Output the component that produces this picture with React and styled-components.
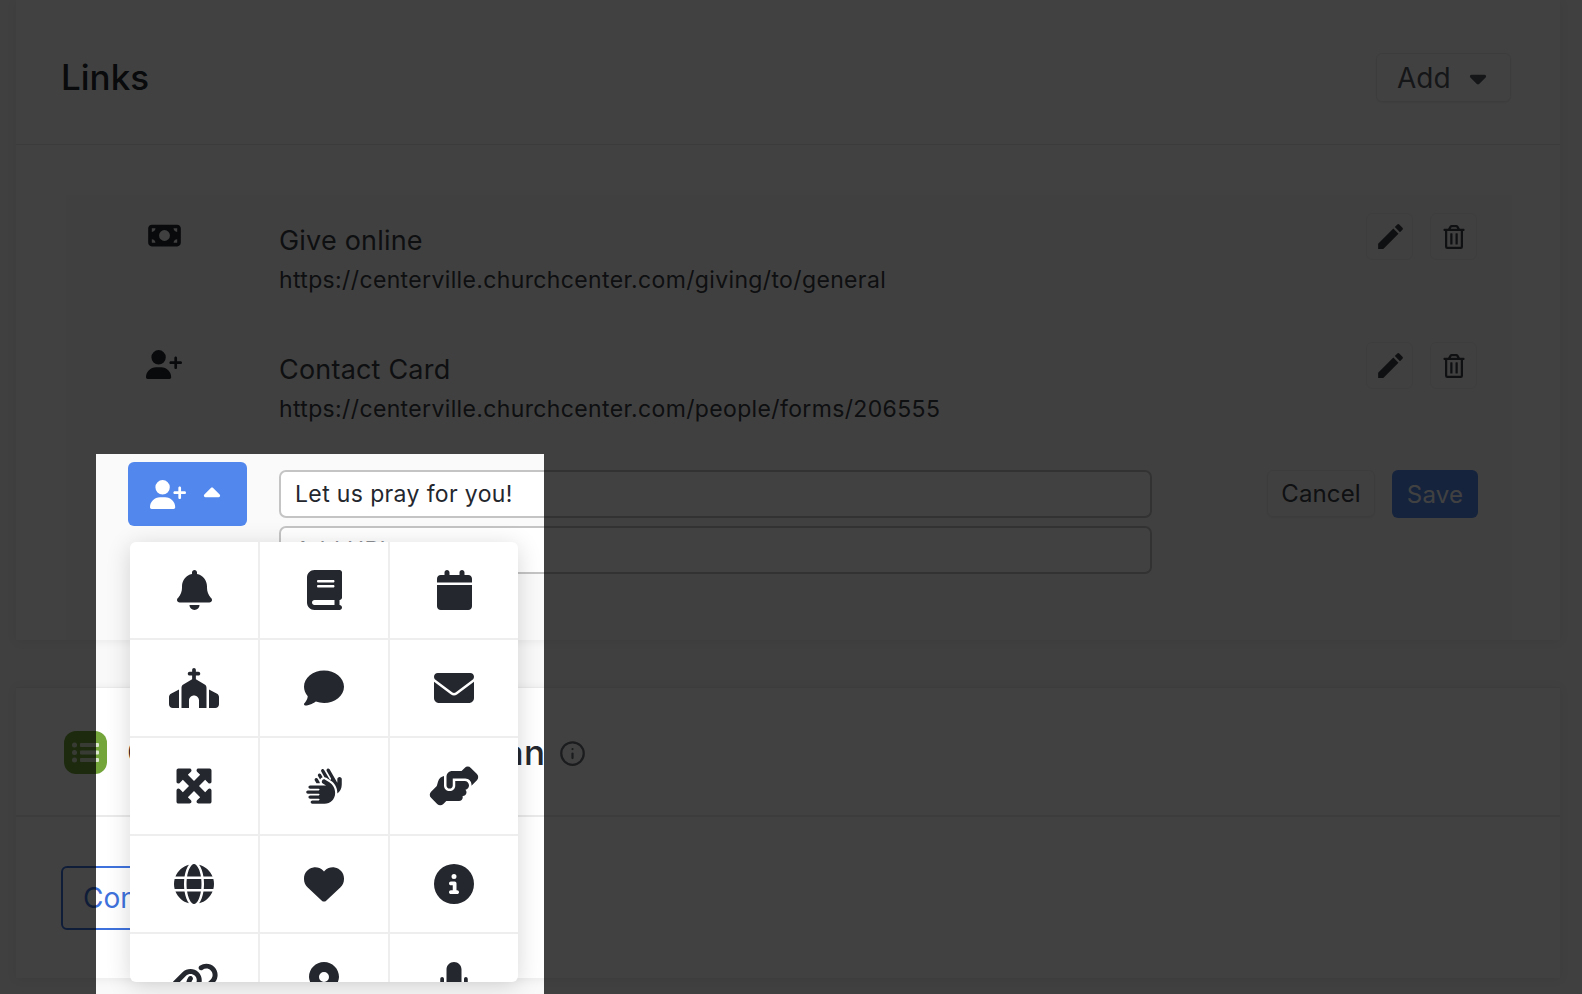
import React from 'react';
import styled, { createGlobalStyle } from 'styled-components';
import {
  FaBell, FaBook, FaCalendar, FaChurch, FaComment, FaEnvelope, FaMaximize,
  FaHands, FaHandshakeAngle, FaGlobe, FaHeart, FaCircleInfo,
  FaLink, FaLocationDot, FaMicrophone, FaMoneyBill, FaUserPlus,
  FaCaretDown, FaCaretUp,
} from 'react-icons/fa6';
import { FaRegTrashAlt } from 'react-icons/fa';
import { MdEdit } from 'react-icons/md';
import { FiInfo } from 'react-icons/fi';

const Global = createGlobalStyle`
  html, body { margin: 0; height: 100%; overflow: hidden; background: #f9f9f9; }
  body { font-family: Inter, "Liberation Sans", sans-serif; color: #24272e; }
  * { box-sizing: border-box; }
`;

const Page = styled.div`
  position: relative;
  width: 1582px;
  height: 994px;
  overflow: hidden;
  padding: 0 22px 0 16px;
`;
const Spotlight = styled.div`
  position: absolute;
  left: 96px;
  top: 454px;
  width: 448px;
  height: 600px;
  box-shadow: 0 0 0 3000px rgba(0, 0, 0, 0.745);
  z-index: 10;
  pointer-events: none;
`;
const Panel = styled.section`
  background: #fff;
  box-shadow: 0 1px 10px rgba(0, 0, 0, 0.07);
`;
const LinksPanel = styled(Panel)`
  height: 640px;
  margin-bottom: 47px;
`;
const PanelHeader = styled.header`
  height: 145px;
  padding: 0 52px 0 46px;
  display: flex;
  align-items: center;
  justify-content: space-between;
  border-bottom: 1px solid #e8e8e8;
`;
const Title = styled.h2`
  margin: 10px 0 0 -1px;
  font-size: 35px;
  font-weight: 550;
  color: #24272e;
`;
const Button = styled.button`
  font: inherit;
  font-size: 26px;
  height: 48px;
  padding: 0 16px;
  display: inline-flex;
  align-items: center;
  border: 1px solid #ececec;
  border-radius: 6px;
  background: #fff;
  color: #5c6068;
  box-shadow: 0 1px 2px rgba(0,0,0,.06);
`;
const AddButton = styled(Button)`
  height: 49px;
  width: 135px;
  font-size: 28px;
  padding: 0 0 0 20px;
  gap: 14px;
  margin-top: 11px;
  margin-right: -3px;
  color: #55585f;
  & svg { width: 26px; height: 26px; }
`;
const LinksCard = styled.div`
  margin: 50px 48px 0 50px;
  height: 445px;
  background: #fafafa;
`;
const Row = styled.div`
  display: grid;
  grid-template-columns: 213px 1fr auto;
  height: 129px;
  padding: 18px 35px 0 0;
`;
const IconSlot = styled.div`
  width: 196px;
  padding-top: 8px;
  display: flex;
  justify-content: center;
  align-items: flex-start;
  color: #24272e;
  & svg { display: block; width: ${(p) => p.$w}px; height: 29px; }
`;
const LinkText = styled.div`
  padding-top: 11px;
`;
const LinkName = styled.div`
  font-size: 27px;
  line-height: 34px;
  letter-spacing: 0.2px;
  color: #3a3d44;
`;
const LinkUrl = styled.div`
  margin-top: 7px;
  font-size: 23px;
  line-height: 30px;
  letter-spacing: 0.36px;
  color: #3a3d44;
`;
const RowActions = styled.div`
  display: flex;
  gap: 17px;
`;
const IconButton = styled.button`
  width: 47px;
  height: 47px;
  display: flex;
  align-items: center;
  justify-content: center;
  padding: 0;
  border: 1px solid #efefef;
  border-radius: 6px;
  background: #fafafa;
  color: #3c3f46;
`;
const EditIcon = styled(MdEdit)`
  width: 33px;
  height: 33px;
  margin-left: 1px;
`;
const TrashIcon = styled(FaRegTrashAlt)`
  width: 24px;
  height: 24px;
`;
const FormRow = styled.div`
  display: grid;
  grid-template-columns: 213px 873px 1fr auto;
  padding: 0 34px 0 0;
  margin-top: 9px;
`;
const PickerWrap = styled.div`
  position: relative;
  margin-left: 62px;
  width: 119px;
`;
const PickerButton = styled.button`
  width: 119px;
  height: 64px;
  border: 0;
  border-radius: 6px;
  background: #5288ee;
  color: #fff;
  display: flex;
  align-items: center;
  padding: 0 0 0 22px;
  gap: 13px;
  & svg:first-child { width: 36px; height: 29px; }
  & svg:last-child { width: 26px; height: 26px; }
`;
const Dropdown = styled.div`
  position: absolute;
  left: 2px;
  top: 80px;
  width: 388px;
  height: 440px;
  background: #fff;
  border-radius: 6px;
  overflow: hidden;
  box-shadow: 0 4px 24px rgba(0, 0, 0, 0.16);
  display: grid;
  grid-template-columns: 130px 130px 128px;
  grid-auto-rows: 98px;
  z-index: 5;
`;
const Cell = styled.div`
  display: flex;
  align-items: center;
  justify-content: center;
  color: #24272e;
  border-right: 2px solid #eee;
  border-bottom: 2px solid #eee;
  &:nth-child(3n) { border-right: 0; }
  & svg { width: ${(p) => p.$w}px; height: 40px; }
`;
const Fields = styled.div`
  display: flex;
  flex-direction: column;
  gap: 8px;
  padding-top: 8px;
`;
const Field = styled.input`
  width: 100%;
  height: 48px;
  padding: 0 14px;
  font: inherit;
  font-size: 23px;
  letter-spacing: 0.36px;
  color: #24272e;
  border: 2px solid #c4c4c4;
  border-radius: 7px;
  background: #fff;
  outline: 0;
  &::placeholder { color: #8c8f95; }
`;
const FormActions = styled.div`
  grid-column: 4;
  display: flex;
  gap: 17px;
  padding-top: 8px;
`;
const CancelButton = styled(Button)`
  width: 108px;
  height: 47px;
  justify-content: center;
  padding: 0;
  font-size: 24px;
  letter-spacing: 0.1px;
  background: #fafafa;
  color: #3c3f46;
`;
const SaveButton = styled(Button)`
  width: 86px;
  height: 48px;
  justify-content: center;
  padding: 0;
  font-size: 24px;
  letter-spacing: 0.2px;
  border: 0;
  background: #5288ee;
  color: #fff;
  box-shadow: none;
`;
const PlanPanel = styled(Panel)`
  height: 291px;
`;
const PlanHeader = styled.div`
  height: 130px;
  padding: 0 0 0 48px;
  display: flex;
  align-items: center;
  gap: 20px;
  border-bottom: 2px solid #eaeaea;
  border-top: 1px solid #eaeaea;
`;
const AppMark = styled.div`
  width: 43px;
  height: 43px;
  margin-top: 2px;
  border-radius: 12px;
  background: #73a53a;
  display: flex;
  align-items: center;
  justify-content: center;
`;
const PlanTitle = styled.h2`
  margin: 0;
  font-size: 35px;
  font-weight: 550;
  letter-spacing: 0.18px;
  color: #24272e;
  white-space: nowrap;
  display: flex;
  align-items: center;
  gap: 14px;
`;
const InfoMark = styled(FiInfo)`
  width: 27px;
  height: 27px;
  margin-top: 3px;
  color: #6a6d73;
`;
const PlanFooter = styled.div`
  padding: 49px 0 0 45px;
`;
const ConnectButton = styled.button`
  height: 64px;
  width: 300px;
  font: inherit;
  font-size: 28px;
  text-align: left;
  padding: 0 0 0 20px;
  background: #fff;
  color: #3f72dc;
  border: 2px solid #3f72dc;
  border-radius: 6px;
`;

const pickerIcons = [
  [FaBell, 35], [FaBook, 35], [FaCalendar, 35],
  [FaChurch, 50], [FaComment, 40], [FaEnvelope, 40],
  [FaMaximize, 40], [FaHands, 40], [FaHandshakeAngle, 50],
  [FaGlobe, 40], [FaHeart, 40], [FaCircleInfo, 40],
  [FaLink, 50], [FaLocationDot, 30], [FaMicrophone, 30],
];

const links = [
  { Icon: FaMoneyBill, w: 33, name: 'Give online', url: 'https://centerville.churchcenter.com/giving/to/general' },
  { Icon: FaUserPlus, w: 36, name: 'Contact Card', url: 'https://centerville.churchcenter.com/people/forms/206555' },
];

export default function App() {
  return (
    <Page>
      <Global />
      <LinksPanel>
        <PanelHeader>
          <Title>Links</Title>
          <AddButton>Add <FaCaretDown /></AddButton>
        </PanelHeader>
        <LinksCard>
          {links.map(({ Icon, w, name, url }) => (
            <Row key={name}>
              <IconSlot $w={w}><Icon /></IconSlot>
              <LinkText>
                <LinkName>{name}</LinkName>
                <LinkUrl>{url}</LinkUrl>
              </LinkText>
              <RowActions>
                <IconButton><EditIcon /></IconButton>
                <IconButton><TrashIcon /></IconButton>
              </RowActions>
            </Row>
          ))}
          <FormRow>
            <PickerWrap>
              <PickerButton><FaUserPlus /><FaCaretUp /></PickerButton>
              <Dropdown>
                {pickerIcons.map(([Icon, w], i) => <Cell key={i} $w={w}><Icon /></Cell>)}
              </Dropdown>
            </PickerWrap>
            <Fields>
              <Field defaultValue="Let us pray for you!" />
              <Field placeholder="Add URL" />
            </Fields>
            <FormActions>
              <CancelButton>Cancel</CancelButton>
              <SaveButton>Save</SaveButton>
            </FormActions>
          </FormRow>
        </LinksCard>
      </LinksPanel>
      <PlanPanel>
        <PlanHeader>
          <AppMark>
            <svg width="27" height="23" viewBox="0 0 27 23" fill="#fff" fillOpacity=".75">
              <circle cx="2.5" cy="4" r="2.5" /><circle cx="2.5" cy="11.5" r="2.5" /><circle cx="2.5" cy="19" r="2.5" />
              <rect x="8" y="2" width="19" height="4" rx="1" /><rect x="8" y="9.5" width="19" height="4" rx="1" /><rect x="8" y="17" width="19" height="4" rx="1" />
            </svg>
          </AppMark>
          <PlanTitle>Church Center Care Plan <InfoMark /></PlanTitle>
        </PlanHeader>
        <PlanFooter>
          <ConnectButton>Connect</ConnectButton>
        </PlanFooter>
      </PlanPanel>
      <Spotlight />
    </Page>
  );
}
